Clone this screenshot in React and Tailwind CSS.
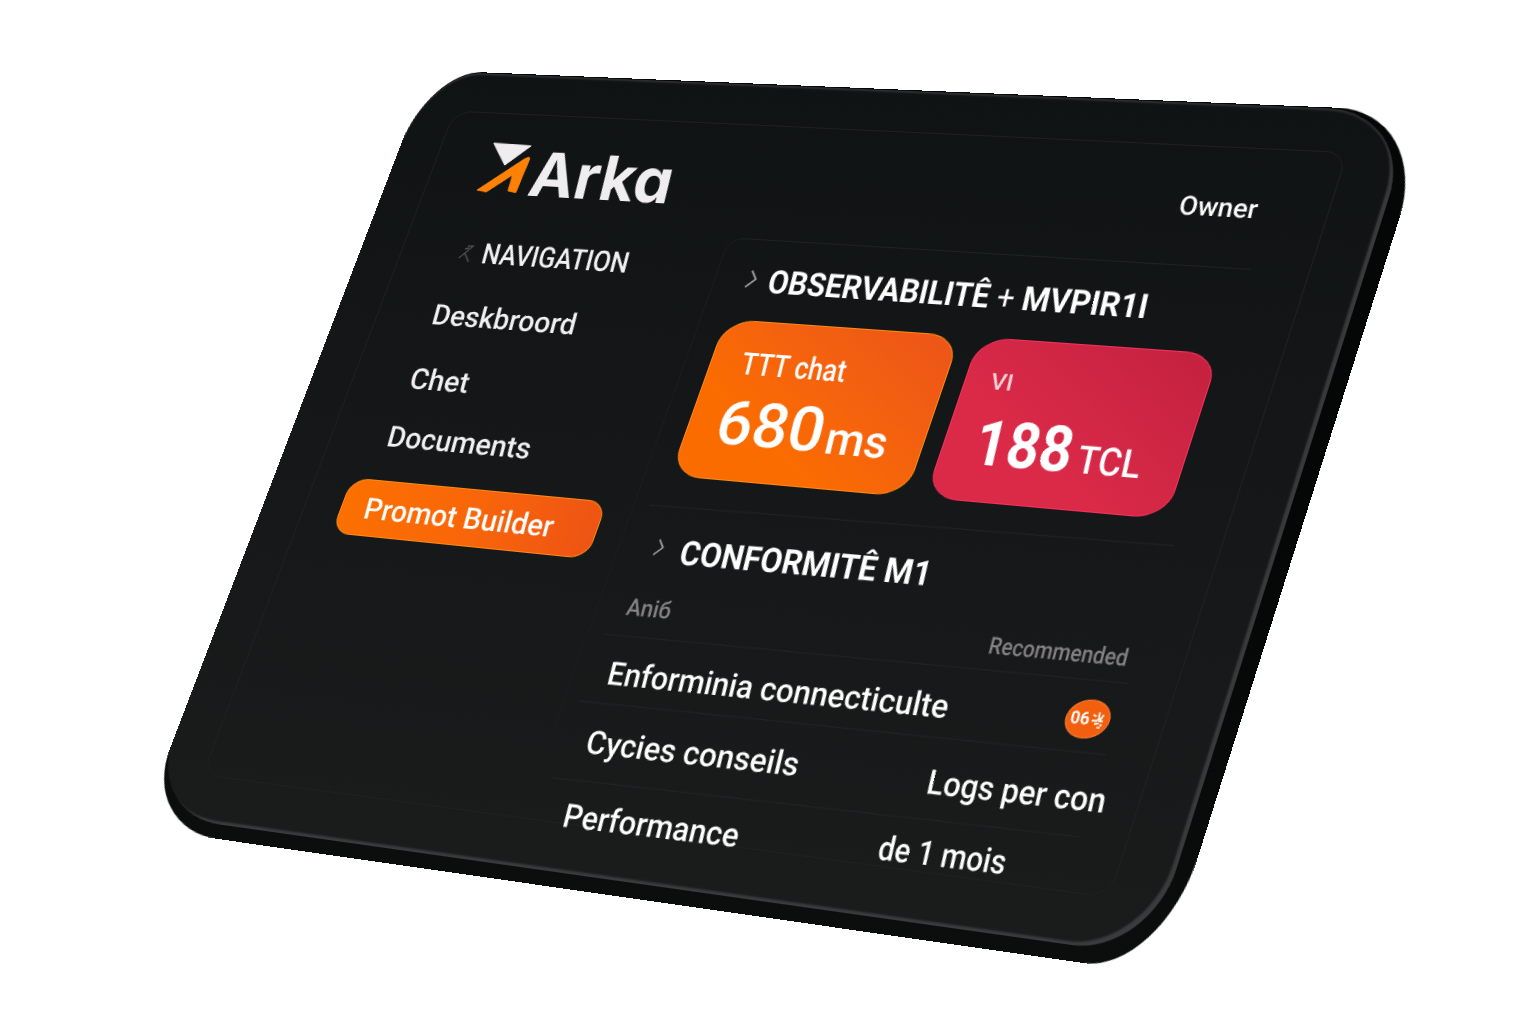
import React, { useLayoutEffect, useRef, useState } from "react";

/* Projects a w×h plane onto four corners (tl, tr, br, bl) as a CSS matrix. */
function project(w, h, [[x0, y0], [x1, y1], [x2, y2], [x3, y3]]) {
  const dx1 = x1 - x2, dx2 = x3 - x2, dx3 = x0 - x1 + x2 - x3;
  const dy1 = y1 - y2, dy2 = y3 - y2, dy3 = y0 - y1 + y2 - y3;
  const det = dx1 * dy2 - dx2 * dy1;
  const g = (dx3 * dy2 - dx2 * dy3) / det;
  const k = (dx1 * dy3 - dx3 * dy1) / det;
  const m = [
    (x1 - x0 + g * x1) / w, (y1 - y0 + g * y1) / w, 0, g / w,
    (x3 - x0 + k * x3) / h, (y3 - y0 + k * y3) / h, 0, k / h,
    0, 0, 1, 0,
    x0, y0, 0, 1,
  ];
  return `matrix3d(${m.join(",")})`;
}

const BOARD = project(1000, 790, [[429, 71], [1416, 112], [1149, 956], [145, 814]]);

/* One line of text squeezed or stretched to a given width, with a softened lean. */
function Label({ w, lean = 6, className = "", children }) {
  const ref = useRef(null);
  const [k, setK] = useState(1);
  useLayoutEffect(() => {
    if (ref.current) setK(w / ref.current.offsetWidth);
  }, [w]);
  return (
    <div className={`shrink-0 leading-none ${className}`} style={{ width: w }}>
      <span
        ref={ref}
        className="inline-block origin-[0_84%] whitespace-nowrap align-top leading-none"
        style={{ transform: `skewX(${lean}deg) scaleX(${k})` }}
      >
        {children}
      </span>
    </div>
  );
}

function Chevron({ className = "" }) {
  return (
    <svg viewBox="0 0 11 20" className={`h-5 w-[11px] shrink-0 ${className}`} fill="none" stroke="#9a9c9d" strokeWidth="1.9">
      <path d="M2.500 1.500 9 10 1 18.500" />
    </svg>
  );
}

function Logo() {
  return (
    <svg viewBox="100 72 50 58" className="h-[58px] w-[50px] shrink-0">
      <path d="M102 75 144 76 123 98Z" fill="#efedf0" stroke="#efedf0" strokeWidth="1" strokeLinejoin="round" />
      <path d="M103 126 142 90 146 88 147.500 90 146 126.500 137 125 135.500 108 114 127.500Z" fill="#fd8106" stroke="#fd8106" strokeWidth="1" strokeLinejoin="round" />
    </svg>
  );
}

function Header() {
  return (
    <header className="flex h-[150px] shrink-0 items-start pl-[100px] pt-[72px]">
      <Logo />
      <Label w={153} lean={7} className="ml-[8px] mt-px font-['Inter',sans-serif] text-[65px] font-bold text-[#efedf0] [font-feature-settings:'cv11']">
        Arka
      </Label>
      <Label w={73} className="ml-[503px] mt-[17px] text-[26px] font-medium">Owner</Label>
    </header>
  );
}

function Sidebar() {
  return (
    <aside className="flex w-[403px] shrink-0 flex-col text-[30px] font-medium text-[#f1f1f2]">
      <div className="flex h-[58px] items-end pl-[110px]">
        <svg viewBox="0 0 14 20" className="mb-1 mr-3 h-5 w-3.5" fill="none" stroke="#505253" strokeWidth="1.3">
          <path d="M4 5 8 4M6 2 12 1.500 1 15M6 10 13 18.500" />
        </svg>
        <Label w={158}>NAVIGATION</Label>
      </div>
      <div className="flex h-[67px] items-end pl-[107px]"><Label w={156}>Deskbroord</Label></div>
      <div className="flex h-[68px] items-end pl-[109px]"><Label w={64}>Chet</Label></div>
      <div className="flex h-[61px] items-end pl-[108px]"><Label w={155}>Documents</Label></div>
      <div className="ml-[85px] mt-[30px] flex h-[58px] w-[275px] items-end rounded-[20px/18px] border border-[#ff8a14] bg-linear-to-r from-[#fb7000] via-[#f96609] to-[#ee5413] pb-[12px] pl-[26px] text-white">
        <Label w={204}>Promot Builder</Label>
      </div>
    </aside>
  );
}

function Observability() {
  return (
    <section className="h-[283px]">
      <div className="flex h-[69px] items-end pl-[17px]">
        <Chevron className="mb-[8px] mr-[13px]" />
        <Label w={372} className="text-[33px] font-bold">
          OBSERVABILITÊ <span className="font-normal">+</span> MVPIR1I
        </Label>
      </div>
      <div className="mt-6 flex gap-[18px] pl-2.5">
        <div className="h-[160px] w-[236px] rounded-[31px/27px] border border-[#ff8a14] bg-linear-to-tr from-[#fb6c00] from-30% to-[#ec5418] pl-[32px] pt-[27px]">
          <Label w={106} className="text-[31px] font-medium">TTT chat</Label>
          <div className="-ml-0.5 mt-[14px] flex items-end gap-[3px]">
            <Label w={108} className="text-[61px] font-medium">680</Label>
            <Label w={61} className="mb-0.5 text-[44px] font-medium">ms</Label>
          </div>
        </div>
        <div className="h-[159px] w-[227px] rounded-[31px/27px] border border-[#f92f5c] bg-linear-to-tr from-[#da2a48] from-35% to-[#c3213f] pl-[25px] pt-[31px]">
          <Label w={21} className="text-[22px] font-medium text-[#f8d3da]">VI</Label>
          <div className="ml-[6px] mt-[18px] flex items-end gap-1.5">
            <Label w={93} className="text-[61px] font-bold">188</Label>
            <Label w={59} className="mb-1 text-[37px] font-medium">TCL</Label>
          </div>
        </div>
      </div>
    </section>
  );
}

function Conformity() {
  return (
    <section className="w-[505px] origin-top-left -skew-y-[0.9deg] border-t border-[#222425] text-[31px] font-medium">
      <div className="flex h-[60px] items-end pl-[20px]">
        <Chevron className="mb-[10px] mr-[18px] scale-90" />
        <Label w={247} className="text-[33px] font-bold">CONFORMITÊ M1</Label>
      </div>
      <div className="flex h-[69px] items-end justify-between border-b border-[#222425] pb-4 pl-[15px] pr-[7px] text-[#858286]">
        <Label w={45} className="text-[23px] font-medium">Aniб</Label>
        <Label w={128} className="-mb-[5px] text-[22px] font-medium" lean={4}>Recommended</Label>
      </div>
      <div className="flex h-[66px] items-end justify-between border-b border-[#222425] pl-5 pr-1.5">
        <Label w={332} className="mb-[13px]">Enforminia connecticulte</Label>
        <div className="mb-[12px] flex h-9 w-10 items-center justify-center gap-px rounded-[50%] border border-[#ff7b2a] bg-[#f2600f]">
          <Label w={17} className="text-[16px] font-bold">06</Label>
          <svg viewBox="0 0 12 18" className="mt-0.5 h-[18px] w-3" fill="none" stroke="#fff" strokeWidth="1.6">
            <path d="M1 3.500 4 5M6 1 6.500 6M1 9H5L8 6M10 3 8 9 11 9M4 12 8 11M9 12 11 13M7 15H10" />
          </svg>
        </div>
      </div>
      <div className="flex h-[75px] items-end justify-between border-b border-[#222425] pb-[21px] pl-[23px]">
        <Label w={210}>Cycies conseils</Label>
        <Label w={163} className="-mb-[3px] -mr-[14px]">Logs per con</Label>
      </div>
      <div className="flex h-[49px] items-end pl-[26px]">
        <Label w={174}>Performance</Label>
        <Label w={118} className="mb-1 ml-[132px]">de 1 mois</Label>
      </div>
    </section>
  );
}

export default function App() {
  return (
    <div className="relative h-[1024px] w-[1536px] overflow-hidden bg-white font-['Roboto',sans-serif] text-white">
      <div className="absolute left-0 top-0 h-0 w-0 origin-top-left" style={{ transform: BOARD }}>
        {/* slab thickness */}
        <div className="absolute left-0 top-[-1px] h-[805px] w-[1015px] bg-linear-to-b from-[#050606] from-50% to-[#0c0d0d] [border-radius:60px_86px_68px_86px/82px_104px_104px_80px]" />
        {/* front face */}
        <div className="absolute left-0 top-0 flex h-[790px] w-[1000px] flex-col overflow-hidden bg-linear-to-b from-[#101314] to-[#1a1c1c] shadow-[inset_0_2px_2px_#2e3031,inset_-5px_-4px_2px_-1px_#3a3c3d] [border-radius:60px_80px_68px_84px/82px_84px_78px_76px]">
          <div className="absolute left-[45px] top-[42px] h-[703px] w-[906px] rounded-[20px] border border-[#1e2021]" />
          <div className="absolute left-[387px] top-[160px] h-[530px] w-[510px] rounded-tl-2xl border-l border-t border-l-[#1a1c1d] border-t-[#1f2223]" />
          <Header />
          <div className="relative flex">
            <Sidebar />
            <main className="w-[510px]">
              <Observability />
              <Conformity />
            </main>
          </div>
        </div>
      </div>
    </div>
  );
}
